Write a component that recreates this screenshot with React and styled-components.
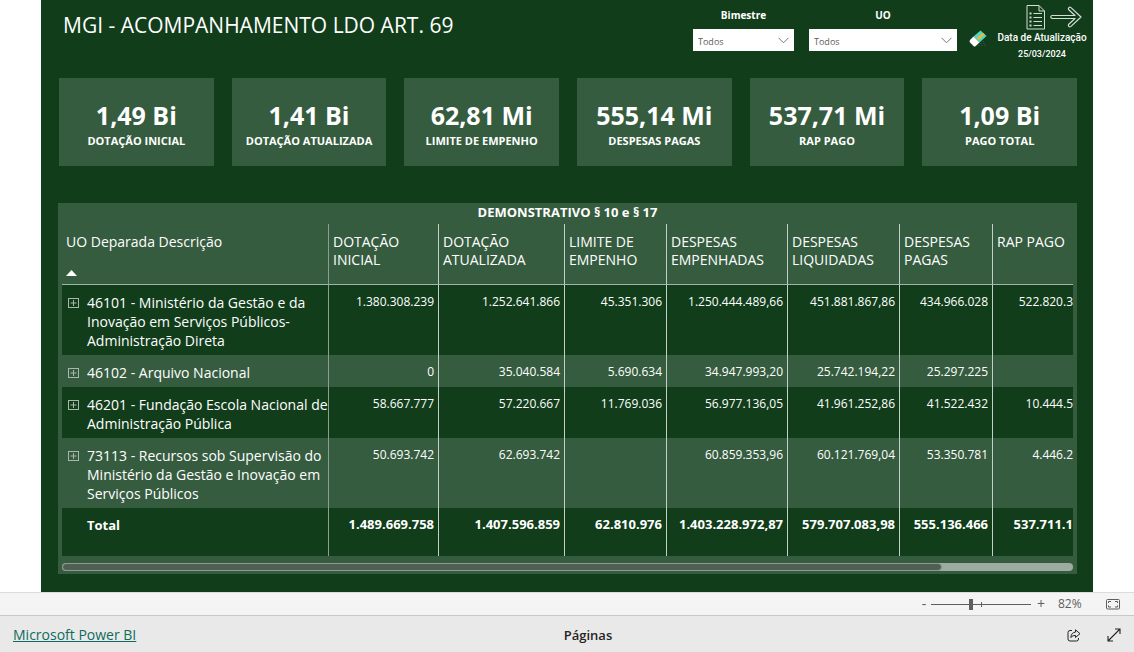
import React, { useState } from "react";
import styled, { createGlobalStyle } from "styled-components";

const GlobalStyle = createGlobalStyle`
    * {
        box-sizing: border-box;
    }

    body {
        margin: 0;
        background: #ffffff;
        color: #ffffff;
        font-family: "Open Sans", "Noto Sans", sans-serif;
    }

    button {
        padding: 0;
        border: none;
        background: none;
        color: inherit;
        cursor: pointer;
    }

    svg {
        display: block;
    }
`

const Page = styled.div`
    min-height: 100vh;
    display: flex;
    flex-direction: column;
`

const Report = styled.main`
    flex: 1;
    margin: 0 41px;
    padding-bottom: 18px;
    background: #113d1b;
`

const TopBar = styled.header`
    display: flex;
    align-items: flex-start;
    height: 78px;
    padding: 0 7px 0 22px;
`

const Title = styled.h1`
    flex: 1;
    margin: 11px 0 0;
    font-size: 21px;
    font-weight: 400;
    line-height: 28px;
`

const Filter = styled.label`
    display: flex;
    flex-direction: column;
    gap: 6px;
    width: ${props => props.$width};
    margin: 7px 15px 0 0;
    font-size: 10px;
    font-weight: 700;
    line-height: 16px;
    text-align: center;
`

const SelectBox = styled.span`
    display: grid;
    align-items: center;
    height: 22px;
    background: #ffffff;

    select, svg {
        grid-area: 1 / 1;
    }

    select {
        appearance: none;
        width: 100%;
        height: 22px;
        padding: 2px 5px 0;
        border: none;
        background: transparent;
        color: #605e5c;
        font-family: inherit;
        font-size: 9px;
    }

    svg {
        justify-self: end;
        margin-right: 5px;
        pointer-events: none;
    }
`

const EraserButton = styled.button`
    margin: 30px 10px 0 -3px;
`

const Updated = styled.div`
    display: flex;
    flex-direction: column;
    align-items: center;
    width: 88px;
    padding-top: 4px;
    font-family: Roboto, sans-serif;
    font-size: 9px;
    font-weight: 500;
    line-height: 16px;
    white-space: nowrap;
`

const UpdatedLabel = styled.span`
    font-size: 10px;
`

const UpdatedIcons = styled.div`
    display: flex;
    align-items: center;
    gap: 4px;
    padding-left: 24px;
`

const Cards = styled.section`
    display: grid;
    grid-template-columns: repeat(6, 1fr);
    gap: 18px;
    margin: 0 16px 0 18px;
`

const Card = styled.div`
    display: flex;
    flex-direction: column;
    align-items: center;
    height: 88px;
    padding-top: 21px;
    background: #365c40;
    white-space: nowrap;
`

const CardValue = styled.strong`
    font-size: 25px;
    line-height: 32px;
`

const CardLabel = styled.span`
    font-size: 11px;
    font-weight: 700;
    line-height: 20px;
`

const Panel = styled.section`
    margin: 37px 16px 0 17px;
    padding: 0 4px 3px;
    background: #365c40;
`

const PanelTitle = styled.h2`
    margin: 0;
    padding-bottom: 3px;
    font-size: 13px;
    font-weight: 700;
    line-height: 18px;
    text-align: center;
`

const TableClip = styled.div`
    overflow: hidden;
`

const Table = styled.table`
    width: 100%;
    table-layout: fixed;
    border-collapse: separate;
    border-spacing: 0;
    font-size: 14px;
    line-height: 19px;

    th, td {
        vertical-align: top;
        border-right: 1px solid #c3cec6;
    }

    th:first-child {
        border-right-color: #8a9f8f;
    }

    th:last-child, td:last-child {
        border-right: none;
    }
`

const Col = styled.col`
    width: ${props => props.$width};
`

const HeadCell = styled.th`
    height: 61px;
    padding: 9px 4px 0;
    border-bottom: 1px solid #a3b3a7;
    font-weight: 400;
    line-height: 18px;
    text-align: left;
`

const SortMark = styled.svg`
    margin-top: 19px;
`

const Row = styled.tr`
    background: ${props => (props.$light ? "#365c40" : "#113d1b")};
`

const NameCell = styled.th`
    padding: 8px 0 5px 6px;
    font-weight: 400;
    text-align: left;
`

const NameLine = styled.div`
    display: flex;
    align-items: flex-start;
    gap: 8px;
`

const ExpandButton = styled.button`
    flex: none;
    margin-top: 5px;
`

const NumberCell = styled.td`
    padding: 7px 4px 5px;
    font-size: 12px;
    text-align: right;

    &:last-child {
        padding-right: 0;
    }
`

const TotalRow = styled.tr`
    height: 48px;
    background: #113d1b;

    th, td {
        font-size: 13px;
        font-weight: 700;
    }

    th {
        padding-left: 25px;
    }
`

const ScrollTrack = styled.div`
    height: 8px;
    margin-top: 7px;
    border-radius: 4px;
    background: #9dac9f;
`

const ScrollThumb = styled.div`
    width: 87%;
    height: 8px;
    border: 1px solid #8b9c8e;
    border-radius: 4px;
    background: #4f5f52;
`

const ZoomBar = styled.div`
    display: flex;
    align-items: center;
    justify-content: flex-end;
    height: 23px;
    padding-right: 14px;
    border-top: 1px solid #dcdcdc;
    background: #f4f4f4;
    color: #605e5c;
    font-size: 12px;
    line-height: 16px;
`

const ZoomButton = styled.button`
    width: 10px;
    font-family: inherit;
    font-size: 14px;
    line-height: 16px;
`

const ZoomSlider = styled.input`
    appearance: none;
    width: 100px;
    height: 11px;
    margin: 0 5px 0 2px;
    background:
        linear-gradient(#605e5c, #605e5c) 50px 3px / 1px 5px no-repeat,
        linear-gradient(#605e5c, #605e5c) 0 5px / 100px 1px no-repeat;

    &::-webkit-slider-thumb {
        appearance: none;
        width: 4px;
        height: 11px;
        background: #605e5c;
    }
`

const ZoomValue = styled.span`
    width: 60px;
    padding-left: 12px;
`

const Footer = styled.footer`
    display: grid;
    grid-template-columns: 1fr auto 1fr;
    align-items: center;
    height: 37px;
    padding: 2px 13px 0;
    border-top: 1px solid #c8c8c8;
    background: #e9e9e9;
    color: #252423;
    font-size: 13px;
    line-height: 20px;
`

const BrandLink = styled.a`
    justify-self: start;
    color: #0f6b5c;
    font-size: 14px;
`

const PagesLabel = styled.span`
    padding-left: 42px;
    font-weight: 600;
`

const FooterActions = styled.div`
    display: flex;
    justify-self: end;
    gap: 26px;
`

const columns = [
  "DOTAÇÃO INICIAL",
  "DOTAÇÃO ATUALIZADA",
  "LIMITE DE EMPENHO",
  "DESPESAS EMPENHADAS",
  "DESPESAS LIQUIDADAS",
  "DESPESAS PAGAS",
  "RAP PAGO"
];

const columnWidths = ["267px", "110px", "126px", "102px", "121px", "112px", "93px", "auto"];

const cards = [
  { value: "1,49 Bi", label: "DOTAÇÃO INICIAL" },
  { value: "1,41 Bi", label: "DOTAÇÃO ATUALIZADA" },
  { value: "62,81 Mi", label: "LIMITE DE EMPENHO" },
  { value: "555,14 Mi", label: "DESPESAS PAGAS" },
  { value: "537,71 Mi", label: "RAP PAGO" },
  { value: "1,09 Bi", label: "PAGO TOTAL" }
];

const rows = [
  {
    name: "46101 - Ministério da Gestão e da Inovação em Serviços Públicos-Administração Direta",
    values: ["1.380.308.239", "1.252.641.866", "45.351.306", "1.250.444.489,66", "451.881.867,86", "434.966.028", "522.820.3"]
  },
  {
    name: "46102 - Arquivo Nacional",
    values: ["0", "35.040.584", "5.690.634", "34.947.993,20", "25.742.194,22", "25.297.225", ""]
  },
  {
    name: "46201 - Fundação Escola Nacional de Administração Pública",
    values: ["58.667.777", "57.220.667", "11.769.036", "56.977.136,05", "41.961.252,86", "41.522.432", "10.444.5"]
  },
  {
    name: "73113 - Recursos sob Supervisão do Ministério da Gestão e Inovação em Serviços Públicos",
    values: ["50.693.742", "62.693.742", "", "60.859.353,96", "60.121.769,04", "53.350.781", "4.446.2"]
  }
];

const totals = ["1.489.669.758", "1.407.596.859", "62.810.976", "1.403.228.972,87", "579.707.083,98", "555.136.466", "537.711.1"];

const Dropdown = ({ label, width }) => (
  <Filter $width={width}>
    {label}
    <SelectBox>
      <select name={label}>
        <option>Todos</option>
      </select>
      <svg width="11" height="7" viewBox="0 0 11 7" fill="none" stroke="#7a7876">
        <path d="M0.5 0.8L5.5 5.8L10.5 0.8" />
      </svg>
    </SelectBox>
  </Filter>
);

const EraserIcon = () => (
  <svg width="19" height="18" viewBox="0 0 19 18">
    <path d="M9 15.5h8.500M11 13.500h6M13 11.500h3" stroke="#2c4a36" strokeDasharray="2 1" />
    <path d="M4.500 6.500L11.500 0.500L17.500 6L10.500 12.500z" fill="#4fd8c4" />
    <path d="M7.500 8.200L14 2.800L15.800 4.400L9.300 10.200z" fill="#f2b632" />
    <path d="M4.500 6.500L10.500 12.500L6.500 16.200Q5.500 17 4.500 16L1 12.500Q0 11.300 1 10z" fill="#ffffff" />
  </svg>
);

const DocumentIcon = () => (
  <svg width="20" height="26" viewBox="0 0 20 26" fill="none" stroke="#d3dcd5">
    <path d="M1 1.500H13L18.500 7V25H1z" />
    <path d="M13 1.500V7H18.500" />
    <path d="M7.500 9.500H16M7.500 13.500H16M7.500 17.500H16M7.500 21.500H16" />
    <path d="M3.500 9.500H5.500M3.500 13.500H5.500M3.500 17.500H5.500M3.500 21.500H5.500" strokeWidth="2" />
  </svg>
);

const ArrowIcon = () => (
  <svg width="32" height="22" viewBox="0 0 32 22" fill="none" stroke="#d3dcd5" strokeWidth="1.200" strokeLinejoin="round">
    <path d="M2 9.500H25L18.500 3.500Q18 2 19 1.400Q20 0.800 21 1.600L31 11L21 20.400Q20 21.200 19 20.600Q18 20 18.500 18.500L25 12.500H2Q0.800 12.200 0.800 11Q0.800 9.800 2 9.500z" />
  </svg>
);

const PlusBoxIcon = () => (
  <svg width="11" height="11" viewBox="0 0 11 11" fill="none" stroke="#a9b8ad">
    <rect x="0.500" y="0.500" width="10" height="9" />
    <path d="M5.500 2V8M2.500 5H8.500" />
  </svg>
);

const FitIcon = () => (
  <svg width="14" height="11" viewBox="0 0 14 11" fill="none" stroke="#605e5c">
    <rect x="0.500" y="0.500" width="13" height="9.500" rx="1" />
    <path d="M2.500 4V2.500H5M9 2.500H11.500V4M11.500 6.500V8H9M5 8H2.500V6.500" />
  </svg>
);

const ShareIcon = () => (
  <svg width="14" height="13" viewBox="0 0 14 13" fill="none" stroke="#252423" strokeLinejoin="round">
    <path d="M5 1.500H3Q1 1.500 1 3.500V10Q1 12 3 12H9.500Q11.500 12 11.500 10V9" />
    <path d="M8.500 0.800L13 4.700L8.500 8.500V6.400Q5.500 6.300 3.800 8.500Q4.200 3.500 8.500 3.100z" />
  </svg>
);

const ExpandIcon = () => (
  <svg width="14" height="14" viewBox="0 0 14 14" fill="none" stroke="#252423" strokeWidth="1.100">
    <path d="M1 13L13 1M8 1H13V6M1 8V13H6" />
  </svg>
);

const App = () => {
  const [zoom, setZoom] = useState(82);

  return (
    <Page>
      <GlobalStyle />
      <Report>
        <TopBar>
          <Title>MGI - ACOMPANHAMENTO LDO ART. 69</Title>
          <Dropdown label="Bimestre" width="101px" />
          <Dropdown label="UO" width="148px" />
          <EraserButton type="button" aria-label="Limpar filtros">
            <EraserIcon />
          </EraserButton>
          <Updated>
            <UpdatedIcons>
              <DocumentIcon />
              <ArrowIcon />
            </UpdatedIcons>
            <UpdatedLabel>Data de Atualização</UpdatedLabel>
            <span>25/03/2024</span>
          </Updated>
        </TopBar>

        <Cards>
          {cards.map(card => (
            <Card key={card.label}>
              <CardValue>{card.value}</CardValue>
              <CardLabel>{card.label}</CardLabel>
            </Card>
          ))}
        </Cards>

        <Panel>
          <PanelTitle>DEMONSTRATIVO § 10 e § 17</PanelTitle>
          <TableClip>
            <Table>
              <colgroup>
                {columnWidths.map((width, i) => <Col key={i} $width={width} />)}
              </colgroup>
              <thead>
                <tr>
                  <HeadCell scope="col">
                    UO Deparada Descrição
                    <SortMark width="11" height="6" viewBox="0 0 11 6">
                      <path d="M0 6L5.500 0L11 6z" fill="#ffffff" />
                    </SortMark>
                  </HeadCell>
                  {columns.map(name => <HeadCell scope="col" key={name}>{name}</HeadCell>)}
                </tr>
              </thead>
              <tbody>
                {rows.map((row, i) => (
                  <Row key={row.name} $light={i % 2 === 1}>
                    <NameCell scope="row">
                      <NameLine>
                        <ExpandButton type="button" aria-label="Expandir">
                          <PlusBoxIcon />
                        </ExpandButton>
                        {row.name}
                      </NameLine>
                    </NameCell>
                    {row.values.map((value, j) => <NumberCell key={j}>{value}</NumberCell>)}
                  </Row>
                ))}
                <TotalRow>
                  <NameCell scope="row">Total</NameCell>
                  {totals.map(value => <NumberCell key={value}>{value}</NumberCell>)}
                </TotalRow>
              </tbody>
            </Table>
          </TableClip>
          <ScrollTrack>
            <ScrollThumb />
          </ScrollTrack>
        </Panel>
      </Report>

      <ZoomBar>
        <ZoomButton type="button">-</ZoomButton>
        <ZoomSlider
          type="range"
          aria-label="Zoom"
          min="10"
          max="190"
          value={zoom}
          onChange={e => setZoom(Number(e.target.value))}
        />
        <ZoomButton type="button">+</ZoomButton>
        <ZoomValue>{zoom}%</ZoomValue>
        <button type="button" aria-label="Ajustar à página">
          <FitIcon />
        </button>
      </ZoomBar>

      <Footer>
        <BrandLink href="#powerbi">Microsoft Power BI</BrandLink>
        <PagesLabel>Páginas</PagesLabel>
        <FooterActions>
          <button type="button" aria-label="Compartilhar">
            <ShareIcon />
          </button>
          <button type="button" aria-label="Tela inteira">
            <ExpandIcon />
          </button>
        </FooterActions>
      </Footer>
    </Page>
  );
}

export default App;
